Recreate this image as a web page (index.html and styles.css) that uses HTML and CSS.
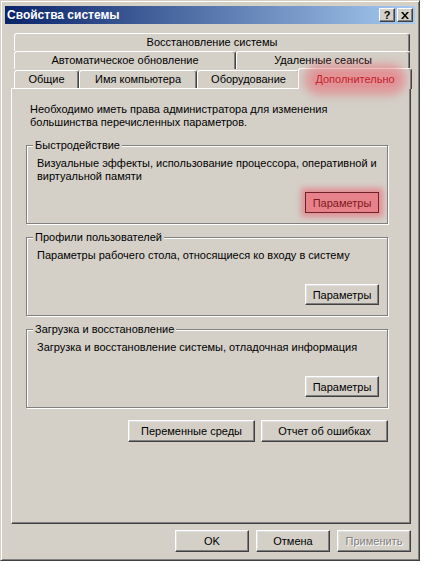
FILE: index.html
```html
<!DOCTYPE html>
<html lang="ru">

<head>
    <meta charset="UTF-8">
    <title>Свойства системы</title>
    <link rel="stylesheet" href="styles.css">
</head>

<body>
    <div class="window">
        <div class="titlebar">
            <span class="title">Свойства системы</span>
            <div class="caption-buttons">
                <button class="cap-btn">?</button>
                <button class="cap-btn">
                    <svg width="8" height="7" viewBox="0 0 8 7">
                        <path d="M0 0h2l2 2.5L6 0h2L5 3.5 8 7H6L4 4.5 2 7H0l3-3.5z" fill="#000" />
                    </svg>
                </button>
            </div>
        </div>

        <div class="tabs">
            <div class="tab-row">
                <div class="tab tab-fill">Восстановление системы</div>
            </div>
            <div class="tab-row">
                <div class="tab tab-update">Автоматическое обновление</div>
                <div class="tab tab-fill">Удаленные сеансы</div>
            </div>
            <div class="tab-row tab-row-front">
                <div class="tab tab-general">Общие</div>
                <div class="tab tab-name">Имя компьютера</div>
                <div class="tab tab-hardware">Оборудование</div>
                <div class="tab tab-fill tab-active"><span class="glow">Дополнительно</span></div>
            </div>
        </div>

        <div class="panel">
            <p class="intro">Необходимо иметь права администратора для изменения<br>большинства перечисленных параметров.</p>

            <div class="group">
                <span class="group-title">Быстродействие</span>
                <p class="group-text">Визуальные эффекты, использование процессора, оперативной и<br>виртуальной памяти</p>
                <button class="btn btn-hot">Параметры</button>
            </div>

            <div class="group group-next">
                <span class="group-title">Профили пользователей</span>
                <p class="group-text">Параметры рабочего стола, относящиеся ко входу в систему</p>
                <button class="btn">Параметры</button>
            </div>

            <div class="group group-next">
                <span class="group-title">Загрузка и восстановление</span>
                <p class="group-text">Загрузка и восстановление системы, отладочная информация</p>
                <button class="btn">Параметры</button>
            </div>

            <div class="panel-actions">
                <button class="btn btn-wide">Переменные среды</button>
                <button class="btn btn-wide">Отчет об ошибках</button>
            </div>
        </div>

        <div class="dialog-actions">
            <button class="btn">OK</button>
            <button class="btn">Отмена</button>
            <button class="btn" disabled>Применить</button>
        </div>
    </div>
</body>

</html>
```

FILE: styles.css
```css
* {
    margin: 0;
    padding: 0;
    box-sizing: border-box;
}

body {
    background-color: #fff;
    font-family: "Liberation Sans", Arial, sans-serif;
    font-size: 11px;
    color: #000;
}

.window {
    width: 420px;
    height: 561px;
    background-color: #d4d0c8;
    border: 1px solid;
    border-color: #d4d0c8 #404040 #404040 #d4d0c8;
    box-shadow: inset 1px 1px #fff, inset -1px -1px #808080;
    padding: 5px 4px 8px 4px;
    display: flex;
    flex-direction: column;
}

/* title bar */
.titlebar {
    height: 18px;
    background: linear-gradient(to right, #0a246a, #a6caf0);
    display: flex;
    align-items: center;
    justify-content: space-between;
    padding: 0 2px;
}

.title {
    color: #fff;
    font-weight: bold;
    font-size: 12px;
}

.caption-buttons {
    display: flex;
    gap: 2px;
}

.cap-btn {
    width: 16px;
    height: 14px;
    background-color: #d4d0c8;
    border: 1px solid;
    border-color: #fff #404040 #404040 #fff;
    box-shadow: inset -1px -1px #808080;
    display: flex;
    align-items: center;
    justify-content: center;
    font-family: "Liberation Sans", Arial, sans-serif;
    font-weight: bold;
    font-size: 11px;
    color: #000;
}

/* tabs */
.tabs {
    margin: 9px 0 0 9px;
    width: 396px;
}

.tab-row {
    display: flex;
    height: 18px;
}

.tab-row-front {
    height: 19px;
    align-items: flex-end;
}

.tab {
    height: 18px;
    border: 1px solid;
    border-bottom: none;
    border-color: #fff #404040 transparent #fff;
    border-radius: 3px 3px 0 0;
    box-shadow: inset -1px 0 #808080;
    background-color: #d4d0c8;
    display: flex;
    align-items: center;
    justify-content: center;
    line-height: 13px;
    white-space: nowrap;
}

.tab-fill {
    flex: 1;
}

.tab-update {
    width: 222px;
}

.tab-general {
    width: 65px;
}

.tab-name {
    width: 118px;
}

.tab-hardware {
    width: 103px;
}

.tab-active {
    height: 21px;
    margin: 0 -2px -1px -2px;
    position: relative;
    z-index: 1;
}

.glow {
    color: #c4202c;
    background-color: rgba(236, 96, 110, 0.55);
    box-shadow: 0 0 10px 8px rgba(236, 96, 110, 0.5);
    border-radius: 10px;
    padding: 1px 3px;
}

/* main panel */
.panel {
    flex: 1;
    margin-left: 6px;
    width: 400px;
    border: 1px solid;
    border-color: #fff #404040 #404040 #fff;
    box-shadow: inset -1px -1px #808080;
    padding: 14px 0 0 14px;
}

.intro {
    margin-left: 4px;
    line-height: 13px;
}

.group {
    width: 362px;
    height: 79px;
    margin-top: 16px;
    border: 1px solid #808080;
    box-shadow: inset 1px 1px #fff, 1px 1px #fff;
    padding: 0 8px 10px 10px;
    display: flex;
    flex-direction: column;
}

.group-next {
    margin-top: 13px;
}

.group-title {
    align-self: flex-start;
    margin: -7px 0 0 -4px;
    padding: 0 2px;
    line-height: 13px;
    background-color: #d4d0c8;
}

.group-text {
    margin-top: 5px;
    line-height: 13px;
}

.group .btn {
    margin-top: auto;
    align-self: flex-end;
    height: 21px;
}

.panel-actions {
    width: 362px;
    margin-top: 12px;
    display: flex;
    justify-content: flex-end;
    gap: 6px;
}

/* buttons */
.btn {
    width: 74px;
    height: 22px;
    background-color: #d4d0c8;
    border: 1px solid;
    border-color: #fff #404040 #404040 #fff;
    box-shadow: inset -1px -1px #808080, inset 1px 1px #dfdfdf;
    font-family: "Liberation Sans", Arial, sans-serif;
    font-size: 11px;
    color: #000;
}

.btn-wide {
    width: 127px;
}

.btn-hot {
    background-color: #e8828a;
    color: #7d1820;
    border-color: #6e2227;
    box-shadow: 0 0 6px 4px rgba(235, 100, 115, 0.6);
}

.btn:disabled {
    color: #808080;
    text-shadow: 1px 1px #fff;
}

.dialog-actions {
    margin-top: 6px;
    padding-right: 4px;
    display: flex;
    justify-content: flex-end;
    gap: 7px;
}
```
